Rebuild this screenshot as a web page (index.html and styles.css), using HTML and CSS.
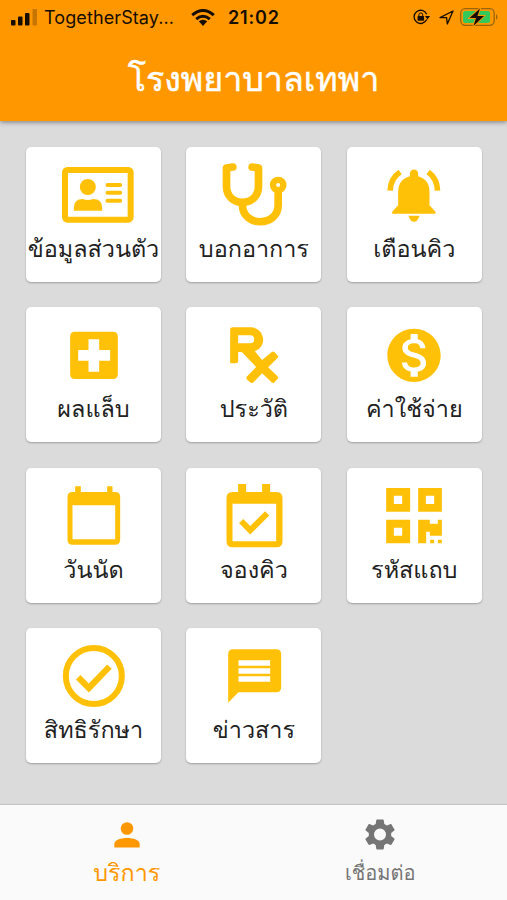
FILE: index.html
```html
<!DOCTYPE html>
<html lang="th">
<head>
<meta charset="utf-8">
<title>โรงพยาบาลเทพา</title>
<link rel="stylesheet" href="styles.css">
</head>
<body>
<header class="header">
  <div class="status">
    <svg class="signal" viewBox="0 0 27 17"><rect x="0" y="11" width="4.500" height="5.500" rx="1"/><rect x="7" y="7.500" width="4.500" height="9" rx="1"/><rect x="14" y="4" width="4.500" height="12.500" rx="1"/><rect x="21.500" y="0" width="4.500" height="16.500" rx="1" opacity=".25"/></svg>
    <span class="carrier">TogetherStay...</span>
    <svg class="wifi" viewBox="0 0 24 17"><g fill="none" stroke="#160d00" stroke-width="3"><path d="M1.200 6.200Q12-3.200 22.800 6.200M5.200 10.200Q12 4.400 18.800 10.200"/></g><path d="M7.800 12.300Q12 9 16.200 12.300L12 17Z"/></svg>
    <span class="time">21:02</span>
    <span class="spacer"></span>
    <svg class="lock" viewBox="0 0 17 16"><path d="M13.700 10.500A6.600 6.600 0 1 1 13.700 5.200" fill="none" stroke="#160d00" stroke-width="1.300"/><path d="M12 7h5l-2.500 3.500z"/><rect x="4.500" y="7" width="6.600" height="4.800" rx=".7"/><path d="M5.900 7V5.800a1.900 1.900 0 0 1 3.800 0V7" fill="none" stroke="#160d00"/></svg>
    <svg class="nav-arrow" viewBox="0 0 15 15"><path d="M1 7.600 14 1 8.300 14 7.600 7.600Z" fill="none" stroke="#160d00" stroke-width="1.300" stroke-linejoin="round"/></svg>
    <svg class="battery" viewBox="0 0 38 18"><rect x=".7" y=".7" width="33.500" height="16.600" rx="4.500" fill="none" stroke="#98640e" stroke-width="1.300"/><rect x="3" y="3" width="27" height="12" rx="2" fill="#34c759"/><path d="M36 6v6q3-3 0-6" fill="#98640e"/><path d="M20 .5 9.500 10H16L13.500 18 24 8H17.500Z" stroke="#ff9800" stroke-width="1.800" paint-order="stroke"/></svg>
  </div>
  <h1 class="title"><span>โรงพยาบาลเทพา</span></h1>
</header>
<main class="grid">
  <section class="card"><svg class="icon" viewBox="116.500 66 240 222"><rect x="149.500" y="105" width="197" height="149" rx="7" fill="none" stroke="#ffc107" stroke-width="18"/><circle cx="218" cy="156" r="24"/><path d="M176 227V219Q176 192 203 192Q218 198 234 192Q261 192 261 219V227Z"/><path class="line" stroke-width="12" stroke-linecap="round" d="M277 150H315M277 173H315M277 197H315"/></svg><span class="label">ข้อมูลส่วนตัว</span></section>
  <section class="card"><svg class="icon" viewBox="116.500 66 240 222"><g class="line" stroke-width="23"><path stroke-linecap="round" stroke-linejoin="round" d="M173 96L154 99V154C154 218 250 218 250 154V99L231 96"/><path d="M202 203V210C202 277 309 277 309 210V160"/></g><circle cx="309" cy="150" r="15.500" class="line" stroke-width="19"/></svg><span class="label">บอกอาการ</span></section>
  <section class="card"><svg class="icon" viewBox="116.500 66 240 222"><path d="M224 124V116A12.500 12.500 0 0 1 249 116V124Q283 134 283 171V211L301 230V236H171V230L189 211V171Q189 134 224 124ZM220 242H253Q248 260 236.500 260Q225 260 220 242Z"/><path class="line" stroke-width="17" d="M165 167Q166 130 195 111M307 167Q306 130 279 111"/></svg><span class="label">เตือนคิว</span></section>
  <section class="card"><svg class="icon" viewBox="116.500 66 240 222"><path fill-rule="evenodd" d="M179 110H293Q308 110 308 125V238Q308 252 293 252H179Q165 252 165 238V125Q165 110 179 110ZM220 133V165H189V197H220V230H252V197H285V165H252V133Z"/></svg><span class="label">ผลแล็บ</span></section>
  <section class="card"><svg class="icon" viewBox="116.500 66 240 222"><path fill-rule="evenodd" d="M173 97H226A37 37 0 0 1 239 169L261 195L290 171Q294 168 298 172L307 181Q311 185 307 189L279 217L307 244Q311 248 307 252L298 262Q294 267 289 262L261 235L235 262Q230 267 225 262L216 254Q211 249 216 244L243 216L200 171H189V198Q189 205 182 205H165V104Q165 97 173 97ZM189 121V145H225Q237 145 237 133Q237 121 225 121Z"/></svg><span class="label">ประวัติ</span></section>
  <section class="card"><svg class="icon" viewBox="596.500 66 240 222"><path transform="translate(620.500 85) scale(8)" d="M12 2C6.480 2 2 6.480 2 12s4.480 10 10 10 10-4.480 10-10S17.520 2 12 2zm1.410 16.090V20h-2.670v-1.930c-1.710-.36-3.160-1.460-3.270-3.400h1.960c.1 1.050.82 1.870 2.650 1.870 1.960 0 2.400-.98 2.400-1.590 0-.83-.44-1.610-2.670-2.140-2.480-.6-4.180-1.620-4.180-3.670 0-1.720 1.390-2.840 3.110-3.210V4h2.670v1.950c1.860.45 2.790 1.860 2.850 3.390H14.300c-.05-1.110-.64-1.870-2.220-1.870-1.500 0-2.400.68-2.400 1.640 0 .84.65 1.390 2.670 1.910s4.180 1.390 4.180 3.910c-.01 1.830-1.380 2.830-3.120 3.160z"/></svg><span class="label">ค่าใช้จ่าย</span></section>
  <section class="card"><svg class="icon" viewBox="116.500 68 240 222"><path fill-rule="evenodd" d="M180 93H197V110H276V93H292V110H300Q315 110 315 125V253Q315 268 300 268H172Q157 268 157 253V125Q157 110 172 110H180ZM172 150V252H300V150Z"/></svg><span class="label">วันนัด</span></section>
  <section class="card"><svg class="icon" viewBox="596.500 68 240 222"><path fill-rule="evenodd" d="M669 86H693V110H741V86H765V110H784Q802 110 802 128V258Q802 276 784 276H652Q634 276 634 258V128Q634 110 652 110H669ZM652 145V258H783V145Z"/><path class="line" stroke-width="18" d="M678 197L705 225L756 174"/></svg><span class="label">จองคิว</span></section>
  <section class="card"><svg class="icon" viewBox="116.500 68 240 222"><path fill-rule="evenodd" d="M153 98H225V169H153ZM176 121V146H201V121ZM249 98H320V169H249ZM272 121V146H297V121ZM153 193H225V264H153ZM176 217V241H201V217ZM249 193H284V205H308V193H320V241H284V229H273V264H249ZM285 253H297V264H285ZM308 253H320V264H308Z"/></svg><span class="label">รหัสแถบ</span></section>
  <section class="card"><svg class="icon" viewBox="116.500 68 240 222"><circle class="line" stroke-width="18" cx="236" cy="182" r="84"/><path class="line" stroke-width="19" d="M189 186L221 218L283 154"/></svg><span class="label">สิทธิรักษา</span></section>
  <section class="card"><svg class="icon" viewBox="596.500 68 240 222"><path fill-rule="evenodd" d="M654 102H783Q798 102 798 117V216Q798 231 783 231H670L639 262V117Q639 102 654 102ZM670 135V151H765V135ZM670 159V175H765V159ZM670 183V199H765V183Z"/></svg><span class="label">ข่าวสาร</span></section>
</main>
<nav class="tabs">
  <div class="tab active"><svg viewBox="0 0 30 32"><circle cx="15" cy="9.500" r="6.300"/><path d="M2.300 28.500V25C2.300 17 27.700 17 27.700 25V28.500Z"/></svg><span>บริการ</span></div>
  <div class="tab"><svg viewBox="0 0 30 32"><path fill-rule="evenodd" transform="translate(-3 -2.500) scale(1.500)" d="M19.430 12.980c.04-.32.07-.64.07-.98s-.03-.66-.07-.98l2.110-1.650c.19-.15.24-.42.12-.64l-2-3.460c-.12-.22-.39-.3-.61-.22l-2.490 1c-.52-.4-1.080-.73-1.690-.98l-.38-2.650C14.460 2.180 14.250 2 14 2h-4c-.25 0-.46.18-.49.42l-.38 2.650c-.61.25-1.170.59-1.690.98l-2.490-1c-.23-.09-.49 0-.61.22l-2 3.460c-.13.22-.07.49.12.64l2.110 1.650c-.04.32-.07.65-.07.98s.03.66.07.98l-2.110 1.650c-.19.15-.24.42-.12.64l2 3.460c.12.22.39.3.61.22l2.490-1c.52.4 1.080.73 1.690.98l.38 2.650c.03.24.24.42.49.42h4c.25 0 .46-.18.49-.42l.38-2.650c.61-.25 1.170-.59 1.690-.98l2.490 1c.23.09.49 0 .61-.22l2-3.460c.12-.22.07-.49-.12-.64l-2.110-1.650zM12 16a4 4 0 1 1 0-8 4 4 0 0 1 0 8z"/></svg><span>เชื่อมต่อ</span></div>
</nav>
</body>
</html>
```

FILE: styles.css
```css
* { box-sizing: border-box; }
body {
  margin: 0;
  width: 507px;
  height: 900px;
  overflow: hidden;
  display: flex;
  flex-direction: column;
  background: #dbdbdb;
  font-family: Loma, Inter, sans-serif;
  color: #222;
}
svg { display: block; flex: none; }
.header {
  height: 121px;
  flex: none;
  background: #ff9800;
  box-shadow: 0 1px 5px rgba(0, 0, 0, .45);
}
.status {
  display: flex;
  align-items: center;
  height: 34px;
  padding: 0 9px 0 11px;
  color: #160d00;
  fill: #160d00;
  font-family: Inter, sans-serif;
  font-size: 18px;
}
.signal { width: 27px; height: 17px; }
.carrier { margin-left: 6px; width: 130px; white-space: nowrap; letter-spacing: .1px; }
.wifi { width: 24px; height: 17px; margin-left: 17px; }
.time { margin-left: 13px; font-weight: 600; letter-spacing: .8px; white-space: nowrap; }
.spacer { flex: 1; }
.lock { width: 17px; height: 16px; }
.nav-arrow { width: 15px; height: 15px; margin-left: 9px; }
.battery { width: 38px; height: 18px; margin-left: 6px; }
.title {
  margin: 0;
  height: 90px;
  display: flex;
  justify-content: center;
  align-items: center;
  color: #fff;
  font-size: 34px;
  font-weight: 400;
  -webkit-text-stroke: .5px #fff;
  white-space: nowrap;
}
.grid {
  flex: 1;
  display: grid;
  grid-template-columns: repeat(3, 135px);
  grid-auto-rows: 135px;
  gap: 25.400px;
  padding: 26px 0 0 26px;
  align-content: start;
}
.card {
  background: #fff;
  border-radius: 5px;
  box-shadow: 0 1px 2px rgba(0, 0, 0, .28);
  padding-top: 10px;
  display: flex;
  flex-direction: column;
  align-items: center;
}
.icon { width: 80px; height: 74px; fill: #ffc107; }
.line { fill: none; stroke: #ffc107; }
.label { font-size: 23.400px; line-height: 35px; white-space: nowrap; }
.tabs {
  height: 95px;
  flex: none;
  display: flex;
  background: #fafafa;
  box-shadow: 0 -1px 1px rgba(0, 0, 0, .1);
  color: #757575;
}
.tab {
  flex: 1;
  display: flex;
  flex-direction: column;
  align-items: center;
  padding-top: 14px;
  font-size: 20px;
  fill: currentColor;
}
.tab svg { width: 30px; height: 32px; }
.tab span { line-height: 45px; white-space: nowrap; }
.active { color: #ff9800; font-size: 23.300px; }
.active span { line-height: 43px; }
```
